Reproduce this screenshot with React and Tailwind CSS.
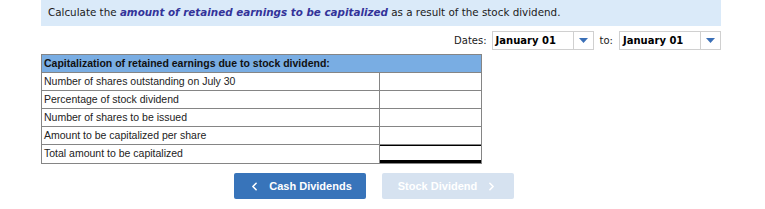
import { ChevronLeft, ChevronRight } from "lucide-react";

const rows = [
    "Number of shares outstanding on July 30",
    "Percentage of stock dividend",
    "Number of shares to be issued",
    "Amount to be capitalized per share",
    "Total amount to be capitalized",
];

function DateSelect() {
    return (
        <div className="flex h-[19px] w-[102px] items-stretch border border-[#d0d0d0] bg-white">
            <span className="flex flex-1 items-center pl-[3px] font-['Verdana','DejaVu_Sans',sans-serif] text-[10px] font-bold text-black">
                January 01
            </span>
            <span className="flex w-[20px] items-center justify-center border-l border-[#d0d0d0]">
                <svg width="9" height="5" viewBox="0 0 9 5">
                    <path d="M0 0 L9 0 L4.5 5 Z" fill="#3a6fb7" />
                </svg>
            </span>
        </div>
    );
}

export default function App() {
    return (
        <div className="w-[765px] h-[209px] bg-white font-['Liberation_Sans',Arial,sans-serif]">
            {/* Instruction banner */}
            <div className="ml-[41px] flex h-[26px] w-[680px] items-center bg-[#daeaf9] pl-[7px] font-['DejaVu_Sans','Verdana',sans-serif] text-[10.35px] text-[#1a1a1a]">
                <span>
                    Calculate the{" "}
                    <b className="italic text-[#333399]">amount of retained earnings to be capitalized</b> as a result of the stock dividend.
                </span>
            </div>

            {/* Dates */}
            <div className="mt-[5px] flex w-[721px] items-center justify-end">
                <span className="mr-[5px] font-['DejaVu_Sans','Verdana',sans-serif] text-[10px] text-[#1a1a1a]">Dates:</span>
                <DateSelect />
                <span className="ml-[6px] mr-[6px] font-['DejaVu_Sans','Verdana',sans-serif] text-[10px] text-[#1a1a1a]">to:</span>
                <DateSelect />
            </div>

            {/* Table */}
            <div className="ml-[41px] mt-[4px] w-[441px] border border-[#858585]">
                <div className="flex h-[18px] items-center border-b border-[#858585] bg-[#79ade3] pl-[2px] text-[10.5px] font-bold text-[#111]">
                    Capitalization of retained earnings due to stock dividend:
                </div>
                {rows.map((label, i) => (
                    <div
                        key={label}
                        className={`flex h-[18px] ${i < rows.length - 1 ? "border-b border-[#858585]" : ""}`}
                    >
                        <div className="flex w-[338px] items-center border-r border-[#858585] pl-[2px] text-[10.5px] text-[#222]">
                            {label}
                        </div>
                        <div
                            className={`flex-1 ${i === rows.length - 1 ? "border-t-[1.5px] border-b-[3px] border-black" : ""}`}
                        />
                    </div>
                ))}
            </div>

            {/* Navigation buttons */}
            <div className="ml-[234px] mt-[9px] flex gap-[16px]">
                <button className="flex h-[26px] w-[132px] items-center justify-center gap-[8px] rounded-[2px] bg-[#3874ba] text-[11px] font-bold text-white">
                    <ChevronLeft size={13} strokeWidth={3} />
                    <span>Cash Dividends</span>
                </button>
                <button className="flex h-[26px] w-[132px] items-center justify-center gap-[8px] rounded-[2px] bg-[#d6e2f0] text-[11px] font-bold text-white">
                    <span>Stock Dividend</span>
                    <ChevronRight size={13} strokeWidth={3} />
                </button>
            </div>
        </div>
    );
}
